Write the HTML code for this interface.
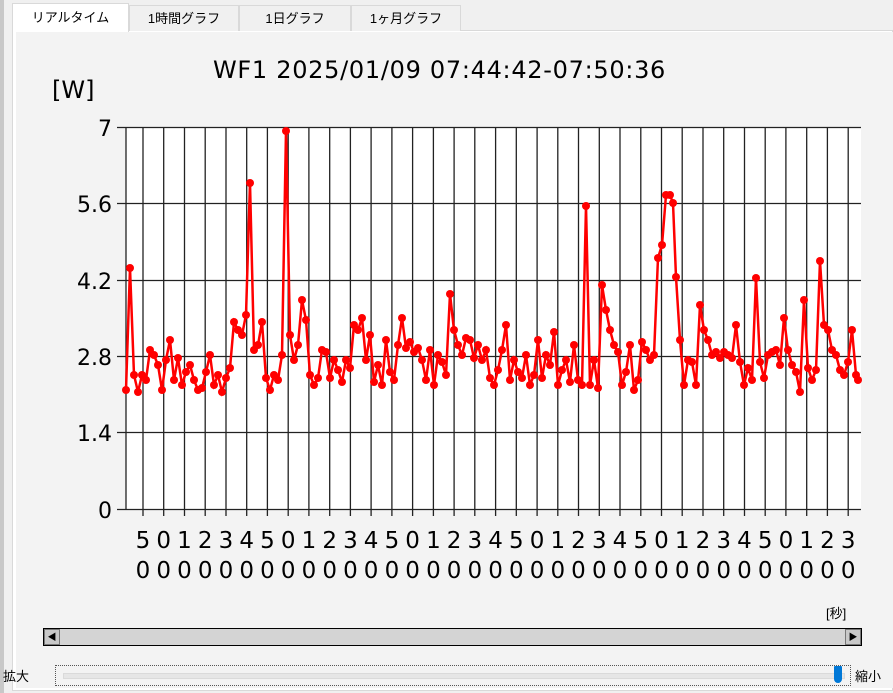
<!DOCTYPE html>
<html><head><meta charset="utf-8"><style>
body{margin:0;width:893px;height:693px;background:#f0f0f0;position:relative;overflow:hidden;font-family:"Liberation Sans","Noto Sans CJK JP",sans-serif;}
.abs{position:absolute}
.tab{position:absolute;top:5px;height:26px;background:#f0f0f0;border:1px solid #d9d9d9;border-bottom:none;font-size:13px;text-align:center;line-height:26px;color:#000;box-sizing:border-box}
</style></head><body>
<div class="abs" style="left:0;top:0;width:4px;height:693px;background:#c8c8c8"></div>
<div class="abs" style="left:12px;top:30px;width:881px;height:661px;background:#fff;border:1px solid #d9d9d9;box-sizing:border-box"></div>
<div class="abs" style="left:16px;top:32px;width:877px;height:656px;background:#f3f3f3"></div>
<div class="tab" style="left:12px;top:3px;width:117px;height:29px;background:#fff;line-height:28px">リアルタイム</div>
<div class="tab" style="left:129px;width:110px">1時間グラフ</div>
<div class="tab" style="left:239px;width:112px">1日グラフ</div>
<div class="tab" style="left:351px;width:110px">1ヶ月グラフ</div>
<div class="abs" style="left:213px;top:56px;font-size:24px;font-family:'DejaVu Sans',sans-serif;letter-spacing:0.7px;white-space:nowrap">WF1 2025/01/09 07:44:42-07:50:36</div>
<div class="abs" style="left:52px;top:76px;font-size:24px;font-family:'DejaVu Sans',sans-serif">[W]</div>
<svg class="abs" style="left:0;top:0" width="893" height="693" font-family="DejaVu Sans, sans-serif">
<defs><marker id="m" markerWidth="8" markerHeight="8" refX="4" refY="4" markerUnits="userSpaceOnUse"><circle cx="4" cy="4" r="4" fill="#f00"/></marker></defs>
<rect x="126" y="127" width="735" height="382" fill="#fff"/>
<g font-size="22" text-anchor="end" fill="#000">
<text x="112" y="136">7</text><text x="112" y="212">5.6</text><text x="112" y="289">4.2</text><text x="112" y="365">2.8</text><text x="112" y="441">1.4</text><text x="112" y="518">0</text>
</g>
<g stroke="#222" stroke-width="1.3">
<line x1="117" y1="127.5" x2="861" y2="127.5"/><line x1="117" y1="203.5" x2="861" y2="203.5"/><line x1="117" y1="280.5" x2="861" y2="280.5"/><line x1="117" y1="356.5" x2="861" y2="356.5"/><line x1="117" y1="432.5" x2="861" y2="432.5"/><line x1="117" y1="509.5" x2="861" y2="509.5"/>
<line x1="126" y1="127" x2="126" y2="509"/>
</g>
<g id="vl" stroke="#222" stroke-width="1.3"></g>
<g id="xl" font-size="23" text-anchor="middle" fill="#000"></g>
<polyline fill="none" stroke="#f00" stroke-width="2.5" marker-start="url(#m)" marker-mid="url(#m)" marker-end="url(#m)" points="126,390 130,268 134,375 138,392 142,375 146,380 150,350 154,355 158,365 162,390 166,360 170,340 174,380 178,358 182,385 186,372 190,365 194,380 198,390 202,388 206,372 210,355 214,385 218,375 222,392 226,378 230,368 234,322 238,330 242,335 246,315 250,183 254,350 258,345 262,322 266,378 270,390 274,375 278,380 282,355 286,131 290,335 294,360 298,345 302,300 306,320 310,375 314,385 318,378 322,350 326,352 330,378 334,360 338,370 342,382 346,360 350,368 354,325 358,330 362,318 366,360 370,335 374,382 378,365 382,385 386,340 390,372 394,380 398,345 402,318 406,348 410,342 414,352 418,348 422,360 426,380 430,350 434,385 438,355 442,362 446,375 450,294 454,330 458,345 462,355 466,338 470,340 474,358 478,345 482,360 486,350 490,378 494,385 498,370 502,350 506,325 510,380 514,360 518,372 522,378 526,355 530,385 534,375 538,340 542,378 546,355 550,365 554,332 558,385 562,370 566,360 570,382 574,345 578,380 582,385 586,206 590,385 594,360 598,388 602,285 606,310 610,330 614,345 618,352 622,385 626,372 630,345 634,390 638,380 642,342 646,350 650,360 654,355 658,258 662,245 666,195 670,195 673,203 676,277 680,340 684,385 688,360 692,362 696,385 700,305 704,330 708,340 712,355 716,352 720,358 724,352 728,355 732,358 736,325 740,362 744,385 748,368 752,380 756,278 760,362 764,378 768,355 772,352 776,350 780,365 784,318 788,350 792,365 796,372 800,392 804,300 808,368 812,380 816,370 820,261 824,325 828,330 832,350 836,355 840,370 844,375 848,362 852,330 856,375 858,380"/>
</svg>
<script>
var vl=document.getElementById('vl'),xl=document.getElementById('xl'),s='';var t='';
for(var i=0;i<35;i++){var x=(143+i*20.74).toFixed(1);s+='<line x1="'+x+'" y1="127" x2="'+x+'" y2="516"/>';t+='<text x="'+x+'" y="548">'+((5+i)%6)+'</text><text x="'+x+'" y="578">0</text>';}
vl.innerHTML=s;xl.innerHTML=t;
</script>
<div class="abs" style="left:826px;top:603px;font-size:13px">[秒]</div>
<div class="abs" style="left:43px;top:628px;width:819px;height:18px;background:#d4d4d4;border:1px solid #000;box-sizing:border-box"></div>
<div class="abs" style="left:44px;top:629px;width:16px;height:16px;background:#c8c8c8;border:1px solid #777;box-sizing:border-box;font-size:9px;line-height:14px;text-align:center">◀</div>
<div class="abs" style="left:845px;top:629px;width:16px;height:16px;background:#c8c8c8;border:1px solid #777;box-sizing:border-box;font-size:9px;line-height:14px;text-align:center">▶</div>
<div class="abs" style="left:3px;top:666px;font-size:13px">拡大</div>
<div class="abs" style="left:55px;top:665px;width:796px;height:21px;border:1px dotted #555;box-sizing:border-box"></div>
<div class="abs" style="left:63px;top:673px;width:780px;height:4px;background:#e6e6e6;border:1px solid #dadada"></div>
<div class="abs" style="left:834px;top:666px;width:8px;height:17px;background:#0078d7;border-radius:1px 1px 4px 4px"></div>
<div class="abs" style="left:855px;top:666px;font-size:13px">縮小</div>
</body></html>
